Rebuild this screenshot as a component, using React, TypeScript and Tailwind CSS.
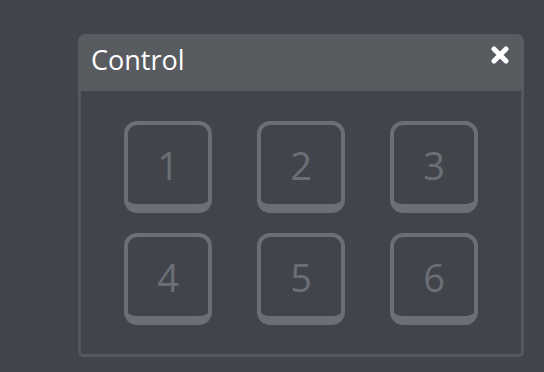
import React from "react";

const keys = ["1", "2", "3", "4", "5", "6"];

const App: React.FC = () => {
  return (
    <div
      className="w-[544px] h-[372px] bg-[#41444b] overflow-hidden pt-[34px] pl-[78px]"
      style={{ fontFamily: "'Open Sans', 'Noto Sans', sans-serif" }}
    >
      <div className="w-[446px] h-[323px] flex flex-col">
        {/* Header */}
        <div className="h-[57px] bg-[#585b60] rounded-t-[7px] flex items-center justify-between pl-[13px] pr-[15px]">
          <span className="text-white text-[27px] leading-none pb-[7px]">Control</span>
          <svg width="18" height="18" viewBox="0 0 18 18" className="-mt-[16px]">
            <path d="M3 3 L15 15 M15 3 L3 15" stroke="#fff" strokeWidth="5" strokeLinecap="round" />
          </svg>
        </div>

        {/* Body */}
        <div className="flex-1 border-[3px] border-t-0 border-[#54575c] rounded-b-[5px] pt-[30px] pl-[43px]">
          <div className="grid grid-cols-[88px_88px_88px] gap-x-[45px] gap-y-[20px]">
            {keys.map((k) => (
              <div
                key={k}
                className="h-[92px] rounded-[13px] border-[4px] border-b-[9px] border-[#6b6f75] flex items-center justify-center"
              >
                <span className="text-[#6b6f75] text-[38px] leading-none">{k}</span>
              </div>
            ))}
          </div>
        </div>
      </div>
    </div>
  );
};

export default App;
